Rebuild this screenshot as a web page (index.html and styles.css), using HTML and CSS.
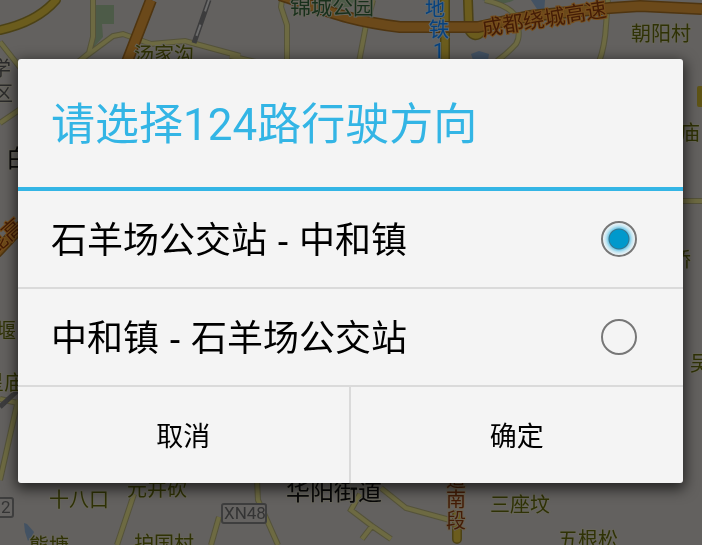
FILE: index.html
```html
<!DOCTYPE html>
<html lang="zh-CN">
<head>
<meta charset="utf-8">
<meta name="viewport" content="width=device-width, initial-scale=1">
<title>选择行驶方向</title>
<link rel="stylesheet" href="styles.css">
</head>
<body>
<svg class="map" viewBox="0 0 702 545" preserveAspectRatio="xMidYMid slice" aria-hidden="true">
  <path class="park" d="M96 5H114V24H102L103 37L93 48Z"/>
  <path class="park" d="M325 0H355L350 7L333 8ZM482 0H514Q503 6 492 2Z"/>
  <path class="water" d="M531 0H545L544 13L539 12ZM471 54L479 51L489 54L488 60H473ZM24 523L27 524L34 532L32 536L28 541L25 532Z"/>

  <g class="road-edge">
    <path id="minor" d="M93 0V37L89 53L78 62M78 62L113 36L123 34L151 44L185 41L240 56M230 56L260 63M0 42L22 70M0 123L25 106M282 0L281 7L287 25V62M366 25L359 62M373 0L370 12M485 0Q507 5 515 15Q522 35 516 44Q508 53 497 61M608 0L606 25Q605 46 599 62M683 201H702M0 399L26 405M18 400L0 480M134 494L117 545M219 517L211 545M257 480L258 500L278 545M381 488L406 508L450 520M360 494L351 510L372 526L391 539M372 526L362 539"/>
  </g>
  <use class="road-fill" href="#minor"/>
  <path class="yellow-edge" d="M0 30Q37 22 56 0M445 0V62M468 0L469 30Q475 40 482 31M457 515V539"/>
  <path class="yellow-fill" d="M0 30Q37 22 56 0M445 0V62M468 0L469 30Q475 40 482 31M457 515V539"/>
  <path class="highway-edge" d="M151 0L127 62M280 -5C330 12 350 21 400 27H478L530 16L610 8L640 6L702 9M-4 253L25 222"/>
  <path class="highway-fill" d="M151 0L127 62M280 -5C330 12 350 21 400 27H478L530 16L610 8L640 6L702 9M-4 253L25 222"/>
  <path class="rail" d="M209 0L194 43M0 407L17 391"/>
  <path class="rail-dash" d="M209 0L194 43"/>
  <rect class="exit" x="697" y="86" width="20" height="21" rx="2"/>

  <g class="village">
    <text x="134" y="62">汤家沟</text>
    <text x="631" y="41">朝阳村</text>
    <text x="49" y="507">十八口</text>
    <text x="127" y="496">元井砍</text>
    <text x="29" y="553">熊塘</text>
    <text x="134" y="551">护国村</text>
    <text x="490" y="512">三座坟</text>
    <text x="558" y="547">五根松</text>
    <text x="680" y="140">庙</text>
    <text x="671" y="267">桥</text>
    <text x="690" y="371">吴</text>
    <text x="-4" y="338">堰</text>
    <text x="-16" y="390">星庙</text>
  </g>
  <text class="park-name" x="290" y="14">锦城公园</text>
  <g class="district"><text x="-9" y="76">学</text><text x="-7" y="101">区</text></g>
  <g class="town"><text x="6" y="167">白</text><text x="286" y="500">华阳街道</text></g>
  <g class="metro"><text x="425" y="16">地</text><text x="429" y="37">铁</text><text x="433" y="58">1</text></g>
  <g class="road-name">
    <text transform="translate(483 36) rotate(-9)">成都绕城高速</text>
    <text transform="translate(-6 256) rotate(-42)">昆高</text>
  </g>
  <g class="street-name">
    <text x="446" y="487">道</text><text x="446" y="507">南</text><text x="446" y="528">段</text>
  </g>
  <g class="shield">
    <rect x="222" y="504" width="44" height="19" rx="2"/><text x="224" y="519">XN48</text>
    <rect x="-20" y="498" width="33" height="19" rx="2"/><text x="1" y="513">2</text>
  </g>
</svg>

<form class="dialog" role="dialog" aria-labelledby="title">
  <h1 class="title" id="title">请选择124路行驶方向</h1>
  <label class="option">
    <span>石羊场公交站 - 中和镇</span>
    <input class="radio" type="radio" name="direction" value="out" checked>
  </label>
  <label class="option">
    <span>中和镇 - 石羊场公交站</span>
    <input class="radio" type="radio" name="direction" value="back">
  </label>
  <div class="actions">
    <button class="action" type="button">取消</button>
    <button class="action" type="button">确定</button>
  </div>
</form>
</body>
</html>
```
FILE: styles.css
```css
* { box-sizing: border-box; }

body {
  margin: 0;
  min-height: 100vh;
  padding: 59px 19px 62px 18px;
  overflow: hidden;
  background: #63615f;
  font-family: Roboto, "Noto Sans CJK SC", sans-serif;
}

/* Dimmed map behind the dialog */
.map {
  position: fixed;
  inset: 0;
  z-index: -1;
  width: 100%;
  height: 100%;
  fill: none;
}
.park { fill: #4d5b48; }
.water { fill: #435263; }
.road-edge { stroke: #55533a; stroke-width: 6; }
.road-fill { stroke: #6d6a42; stroke-width: 4; }
.yellow-edge { stroke: #4c4216; stroke-width: 10; stroke-linecap: round; }
.yellow-fill { stroke: #6b5c1d; stroke-width: 7; stroke-linecap: round; }
.highway-edge { stroke: #4f3510; stroke-width: 12; }
.highway-fill { stroke: #6b491a; stroke-width: 9; }
.rail { stroke: #3c3c3d; stroke-width: 5; }
.rail-dash { stroke: #6c6c6c; stroke-width: 2; stroke-dasharray: 12 14; }
.exit { fill: #5f5415; }
.map text {
  font-size: 20px;
  paint-order: stroke;
  stroke: #67655c;
  stroke-width: 2px;
}
.village { fill: #2f3205; }
.park-name { fill: #18301b; }
.map .park-name { font-size: 21px; }
.district { fill: #2b2b2b; }
.town { fill: #080808; }
.map .town text { font-size: 24px; }
.metro { fill: #07427e; }
.map .metro text { stroke: #5c6870; }
.road-name, .street-name { fill: #441c06; }
.map .road-name text { font-size: 21px; stroke: #78501d; }
.map .street-name text { stroke: #69604f; }
.shield { fill: #343434; }
.shield rect { fill: #656361; stroke: #3e3e3e; stroke-width: 2; }
.map .shield text { font-size: 17px; stroke: none; }

.dialog {
  overflow: hidden;
  border-radius: 3px;
  background: #f4f4f4;
  color: #000;
  box-shadow: 0 4px 14px 2px rgba(0, 0, 0, 0.65);
}

.title {
  margin: 0;
  padding: 34px 33px 30px;
  border-bottom: 4px solid #33b5e5;
  color: #33b5e5;
  font-size: 44px;
  font-weight: 400;
  line-height: 64px;
}

.option {
  display: flex;
  align-items: center;
  justify-content: space-between;
  min-height: 98px;
  padding: 0 46px 0 33px;
  border-bottom: 2px solid #dadada;
  font-family: "Liberation Sans", "Noto Sans CJK SC", sans-serif;
  font-size: 36px;
  line-height: 48px;
}
.option span { padding-top: 4px; }

.radio {
  appearance: none;
  flex: none;
  width: 36px;
  height: 36px;
  margin: 0;
  border: 2px solid #777;
  border-radius: 50%;
}
.radio:checked {
  background: radial-gradient(circle, #0099cc 9px, #3b7188 10px, #7ccdea 11px, #bfe4f1 13px, #f0f5f7 16px);
}

.actions {
  display: grid;
  grid-template-columns: 1fr 1fr;
}
.action {
  height: 96px;
  padding: 4px 0 0;
  border: 0;
  background: transparent;
  color: #000;
  font: 27px/40px Roboto, "Noto Sans CJK SC", sans-serif;
}
.action:first-child { border-right: 2px solid #dadada; }
```
